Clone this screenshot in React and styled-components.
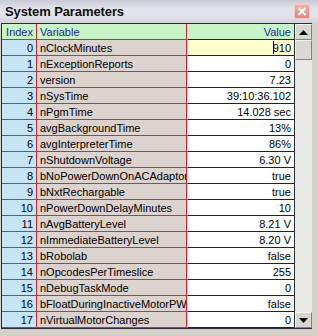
import React from 'react';
import styled, { createGlobalStyle } from 'styled-components';

const GlobalStyle = createGlobalStyle`
  html, body { margin: 0; padding: 0; background: #d4d0c8; }
  body { font-family: "Liberation Sans", Arial, sans-serif; }
`;

const rows = [
  ['nClockMinutes', '910'],
  ['nExceptionReports', '0'],
  ['version', '7.23'],
  ['nSysTime', '39:10:36.102'],
  ['nPgmTime', '14.028 sec'],
  ['avgBackgroundTime', '13%'],
  ['avgInterpreterTime', '86%'],
  ['nShutdownVoltage', '6.30 V'],
  ['bNoPowerDownOnACAdaptor', 'true'],
  ['bNxtRechargable', 'true'],
  ['nPowerDownDelayMinutes', '10'],
  ['nAvgBatteryLevel', '8.21 V'],
  ['nImmediateBatteryLevel', '8.20 V'],
  ['bRobolab', 'false'],
  ['nOpcodesPerTimeslice', '255'],
  ['nDebugTaskMode', '0'],
  ['bFloatDuringInactiveMotorPWM', 'false'],
  ['nVirtualMotorChanges', '0'],
];

const Window = styled.div`
  width: 318px;
  height: 336px;
  background: #d4d0c8;
  display: flex;
  flex-direction: column;
  padding-left: 1px;
  box-sizing: border-box;
  overflow: hidden;
`;

const TitleBar = styled.div`
  height: 23px;
  margin-left: -1px;
  display: flex;
  align-items: center;
  justify-content: space-between;
  padding: 0 8px 1px 5px;
  background: linear-gradient(to bottom, #c9c9d6 0%, #e4e4ec 40%, #e2e2ea 70%, #d2d2dc 100%);
  box-sizing: border-box;
`;

const Title = styled.span`
  font-weight: bold;
  font-size: 13px;
  color: #101010;
  letter-spacing: -0.1px;
`;

const CloseButton = styled.div`
  width: 14px;
  height: 13px;
  background: linear-gradient(#f0b0a8, #e08880);
  border: 1px solid #f4c8c0;
  display: flex;
  align-items: center;
  justify-content: center;
`;

const Body = styled.div`
  display: flex;
  border: 1px solid #2c2c3c;
  border-right: none;
  width: 311px;
  box-sizing: border-box;
`;

const Table = styled.div`
  width: 292px;
  display: grid;
  grid-template-columns: 35px 150px 107px;
  grid-auto-rows: 16px;
  font-size: 11px;
  overflow: hidden;
`;

const Cell = styled.div`
  box-sizing: border-box;
  height: 16px;
  line-height: 16px;
  white-space: nowrap;
  overflow: hidden;
  color: ${p => (p.$head ? '#1a2a8a' : '#000')};
`;

const IndexCell = styled(Cell)`
  background: ${p => (p.$head ? '#c8f4c8' : '#c6e4f4')};
  border-right: 1px solid #c82828;
  border-bottom: 1px solid #d03030;
  text-align: right;
  padding-right: 3px;
`;

const VarCell = styled(Cell)`
  background: ${p => (p.$head ? '#c8f4c8' : '#dcd2ce')};
  border-right: 1px solid #c82828;
  border-bottom: 1px solid #d03030;
  padding-left: 3px;
`;

const ValueCell = styled(Cell)`
  background: ${p => (p.$head ? '#c8f4c8' : p.$edit ? '#ffffd0' : '#fff')};
  border-left: 1px solid #f0e8e8;
  border-bottom: 1px solid #1a1a60;
  text-align: right;
  padding-right: 3px;
`;

const Caret = styled.span`
  display: inline-block;
  width: 1px;
  height: 13px;
  background: #000;
  vertical-align: -2px;
  margin-right: -1px;
`;

const ScrollBar = styled.div`
  width: 17px;
  border-left: 1px solid #2c2c3c;
  background: #ecebe6;
  display: flex;
  flex-direction: column;
`;

const ArrowButton = styled.div`
  height: 16px;
  box-sizing: border-box;
  background: #d8d6d0;
  border: 1px solid;
  border-color: #f4f4f4 #808080 #808080 #f4f4f4;
  display: flex;
  align-items: center;
  justify-content: center;
`;

const Thumb = styled(ArrowButton)`
  height: 20px;
  background: #dad8d2;
`;

const Track = styled.div`
  flex: 1;
  background: #e9e8e4;
`;

const Arrow = ({ down }) => (
  <svg width="9" height="5" viewBox="0 0 9 5">
    <path d={down ? 'M0 0h9L4.5 5z' : 'M0 5h9L4.5 0z'} fill="#000" />
  </svg>
);

export default function App() {
  return (
    <Window>
      <GlobalStyle />
      <TitleBar>
        <Title>System Parameters</Title>
        <CloseButton>
          <svg width="10" height="9" viewBox="0 0 10 9">
            <path d="M1.5 1l7 7M8.5 1l-7 7" stroke="#fff" strokeWidth="2" />
          </svg>
        </CloseButton>
      </TitleBar>
      <Body>
        <Table>
          <IndexCell $head>Index</IndexCell>
          <VarCell $head>Variable</VarCell>
          <ValueCell $head>Value</ValueCell>
          {rows.map(([name, value], i) => (
            <React.Fragment key={name}>
              <IndexCell>{i}</IndexCell>
              <VarCell>{name}</VarCell>
              <ValueCell $edit={i === 0}>
                {i === 0 && <Caret />}
                {value}
              </ValueCell>
            </React.Fragment>
          ))}
        </Table>
        <ScrollBar>
          <ArrowButton><Arrow /></ArrowButton>
          <Thumb />
          <Track />
          <ArrowButton><Arrow down /></ArrowButton>
        </ScrollBar>
      </Body>
    </Window>
  );
}
